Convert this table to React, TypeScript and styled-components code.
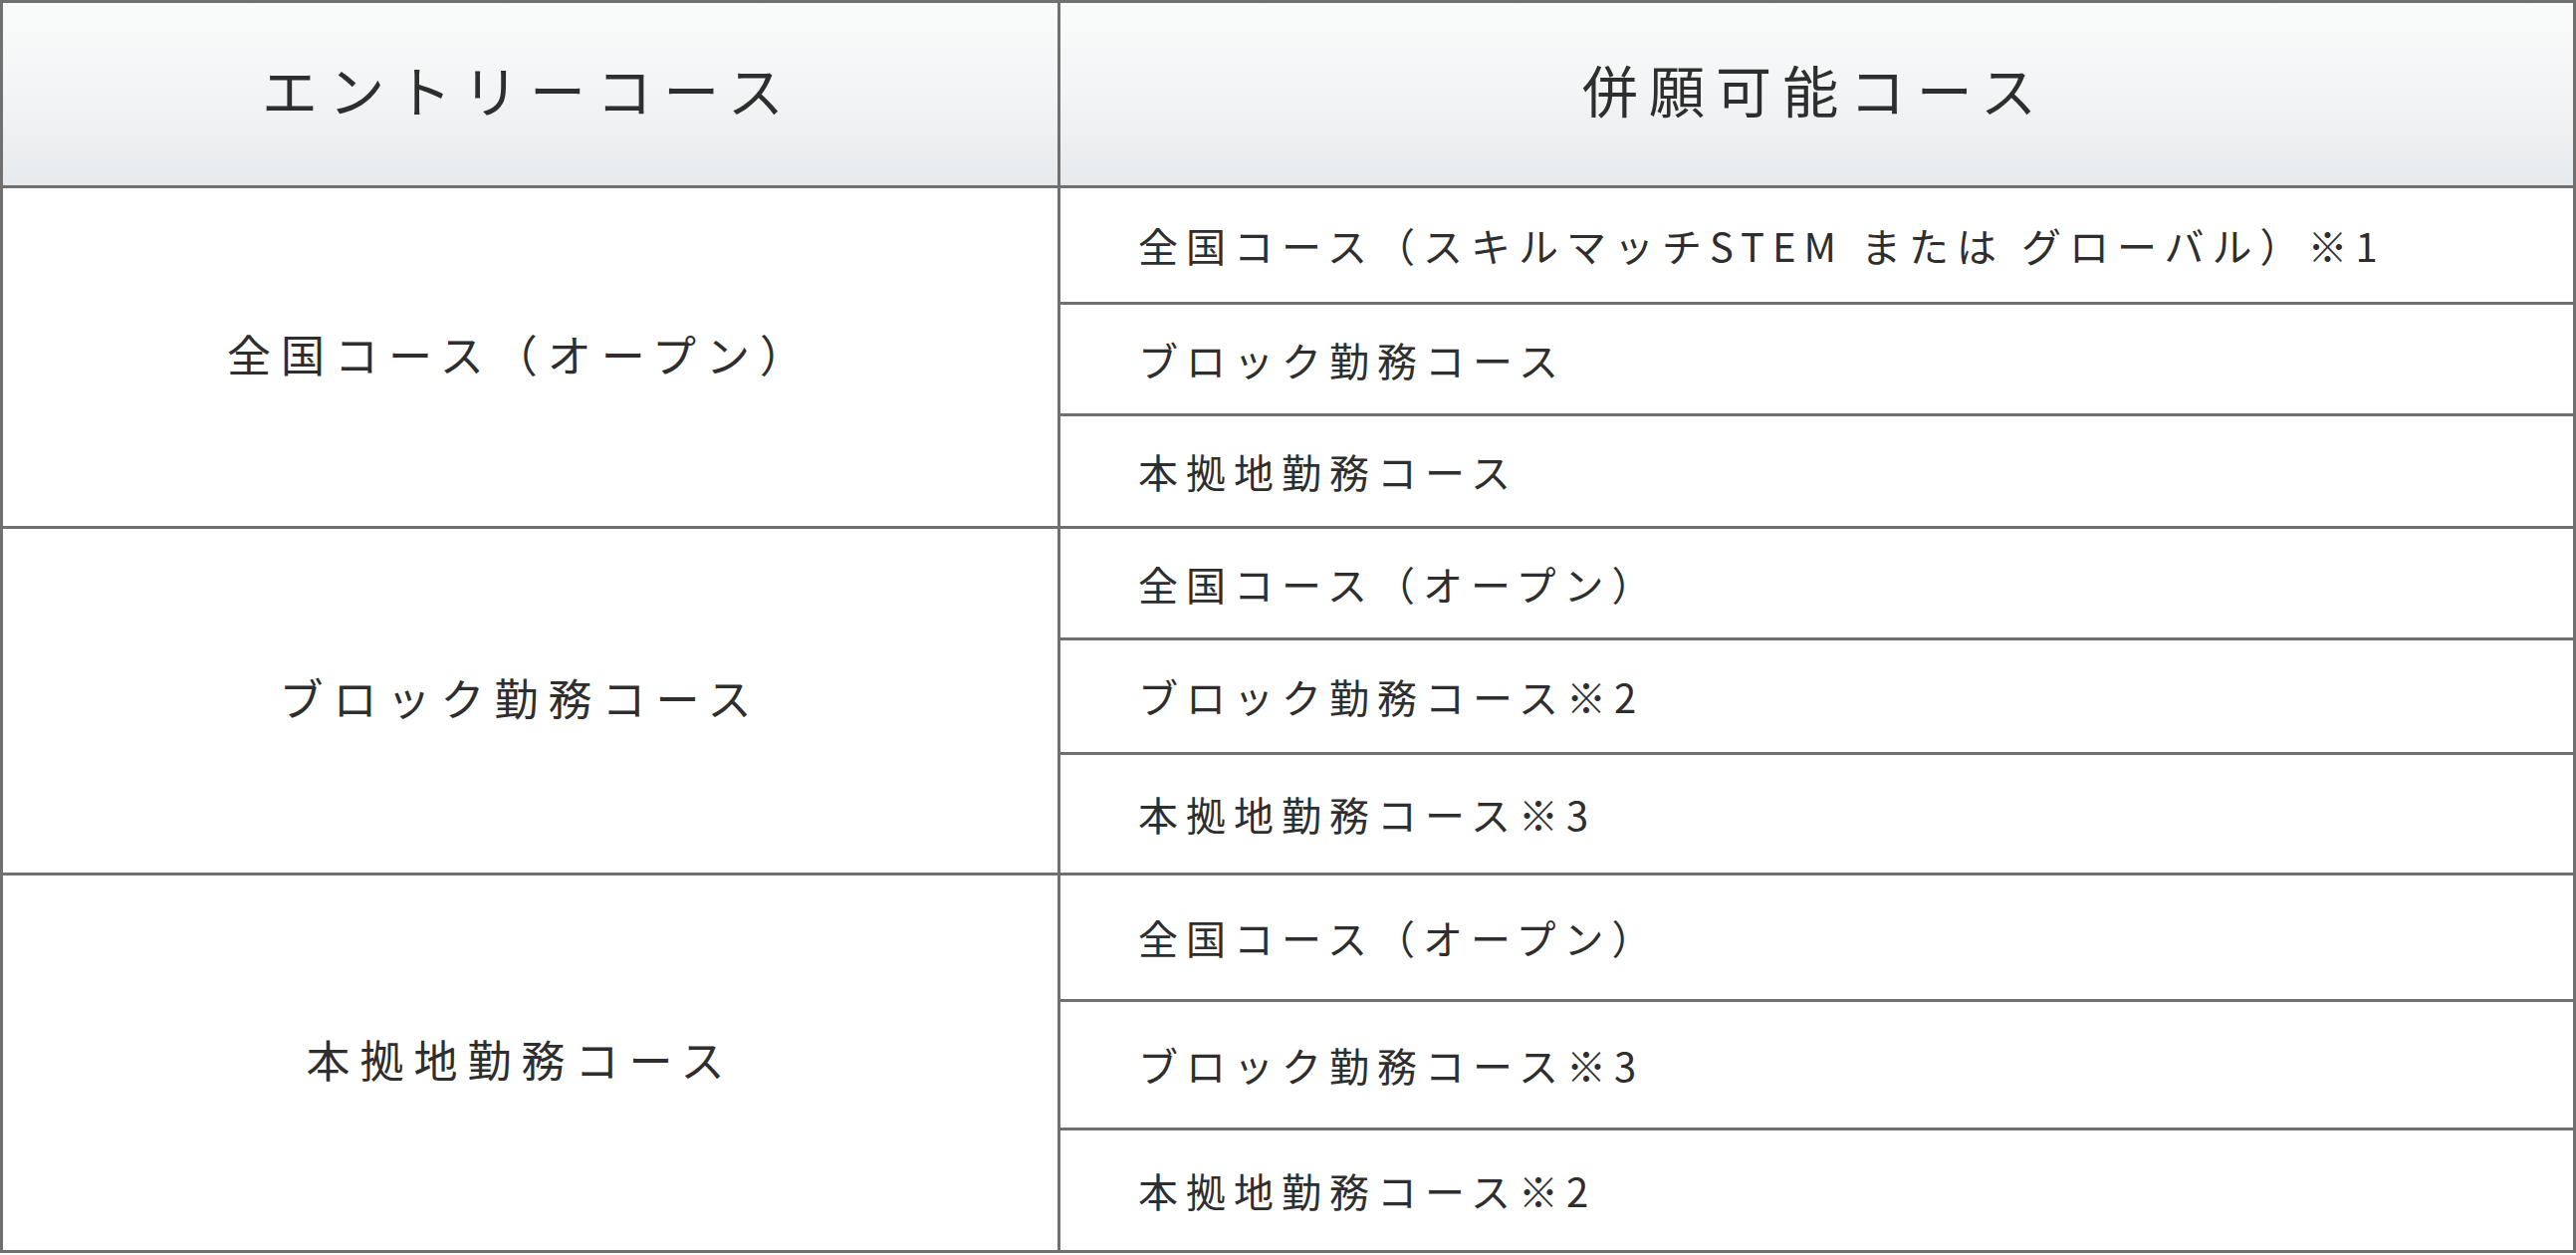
import styled, { createGlobalStyle } from "styled-components";

const GlobalStyle = createGlobalStyle`
  html, body {
    margin: 0;
    padding: 0;
    background: #FFFFFF;
  }
  body {
    font-family: "Noto Sans CJK JP", "Noto Sans", sans-serif;
    color: #2E2E2E;
  }
`;

const CourseTable = styled.div`
  display: grid;
  grid-template-columns: 1059px 1fr;
  gap: 3px;
  padding: 3px;
  width: 100%;
  box-sizing: border-box;
  background: #707070;
`;

const HeadCell = styled.div`
  height: 183px;
  box-sizing: border-box;
  padding: 0 4px 12px 0;
  display: flex;
  align-items: center;
  justify-content: center;
  background: linear-gradient(to bottom, #FAFBFB 0%, #F3F4F5 50%, #E7EAED 100%);
  font-size: 56px;
  letter-spacing: 0.2em;
  white-space: nowrap;
`;

const EntryCell = styled.div`
  grid-row: span 3;
  padding: 0 20px 8px 0;
  display: flex;
  align-items: center;
  justify-content: center;
  background: #FFFFFF;
  font-size: 44px;
  letter-spacing: 10px;
  white-space: nowrap;
`;

const OptionCell = styled.div<{ $height: number }>`
  height: ${(p) => p.$height}px;
  display: flex;
  align-items: center;
  padding-left: 78px;
  background: #FFFFFF;
  font-size: 40px;
  letter-spacing: 0.2em;
  white-space: nowrap;
`;

type Option = { label: string; height: number };
type Group = { entry: string; options: Option[] };

const groups: Group[] = [
  {
    entry: "全国コース（オープン）",
    options: [
      { label: "全国コース（スキルマッチSTEM または グローバル）※1", height: 114 },
      { label: "ブロック勤務コース", height: 109 },
      { label: "本拠地勤務コース", height: 110 },
    ],
  },
  {
    entry: "ブロック勤務コース",
    options: [
      { label: "全国コース（オープン）", height: 109 },
      { label: "ブロック勤務コース※2", height: 112 },
      { label: "本拠地勤務コース※3", height: 118 },
    ],
  },
  {
    entry: "本拠地勤務コース",
    options: [
      { label: "全国コース（オープン）", height: 124 },
      { label: "ブロック勤務コース※3", height: 126 },
      { label: "本拠地勤務コース※2", height: 120 },
    ],
  },
];

export default function App() {
  return (
    <>
      <GlobalStyle />
      <CourseTable>
        <HeadCell>エントリーコース</HeadCell>
        <HeadCell>併願可能コース</HeadCell>
        {groups.map((group) => [
          <EntryCell key={group.entry}>{group.entry}</EntryCell>,
          ...group.options.map((option) => (
            <OptionCell key={group.entry + option.label} $height={option.height}>
              {option.label}
            </OptionCell>
          )),
        ])}
      </CourseTable>
    </>
  );
}
